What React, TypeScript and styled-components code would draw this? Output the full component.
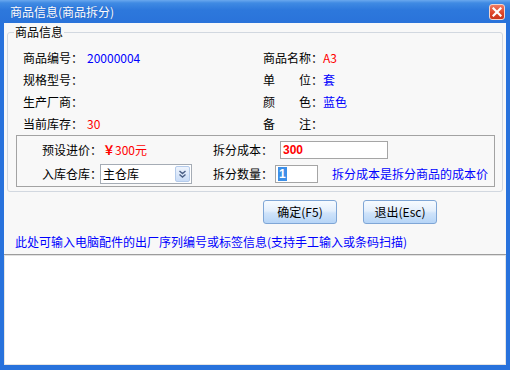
import React from "react";
import styled, { createGlobalStyle } from "styled-components";

const Global = createGlobalStyle`
  html, body { margin: 0; padding: 0; background: #ffffff; }
  body {
    font-family: "Noto Sans CJK SC", "Noto Sans", sans-serif;
    font-size: 12px;
    color: #000;
  }
  * { box-sizing: border-box; }
`;

const Window = styled.div`
  width: 510px;
  height: 370px;
  display: flex;
  flex-direction: column;
  background: #2872dc;
`;

const TitleBar = styled.div`
  height: 23px;
  flex: none;
  display: flex;
  align-items: center;
  justify-content: space-between;
  padding: 0 5px 0 10px;
  background: linear-gradient(#6aa8ee 0px, #3f8ae3 3px, #2d78dc 10px, #2a73da 100%);
`;

const Title = styled.div`
  color: #ffffff;
  font-size: 12px;
  line-height: 14px;
  text-shadow: 0 0 1px rgba(0, 40, 120, 0.4);
`;

const CloseButton = styled.button`
  width: 16px;
  height: 16px;
  padding: 0;
  margin-top: 1px;
  border: 1px solid #f3d4cc;
  border-radius: 3px;
  background: linear-gradient(#f27a62, #dc4326 60%, #c9361c);
  display: flex;
  align-items: center;
  justify-content: center;
`;

const Body = styled.div`
  flex: 1;
  margin: 0 4px 5px 4px;
  background: #f8f8f8;
  display: flex;
  flex-direction: column;
  min-height: 0;
`;

const Group = styled.fieldset`
  margin: 2px 3px 0 3px;
  padding: 8px 7px 4px 8px;
  border: 1px solid #d2d8e0;
  border-radius: 3px;
  min-width: 0;
`;

const Legend = styled.legend`
  padding: 0 1px;
  margin-left: -2px;
  font-size: 12px;
  line-height: 14px;
`;

const InfoGrid = styled.div`
  display: grid;
  grid-template-columns: 64px 176px 60px 1fr;
  grid-auto-rows: 22px;
  align-items: center;
  padding-left: 7px;
`;

const Label = styled.div<{ $spread?: boolean }>`
  line-height: 14px;
  white-space: nowrap;
  display: ${(p) => (p.$spread ? "flex" : "block")};
  justify-content: space-between;
`;

const Value = styled.div<{ $color?: string }>`
  line-height: 14px;
  color: ${(p) => p.$color || "#000"};
  white-space: nowrap;
`;

const SubBox = styled.div`
  border: 1px solid #a3a3a3;
  padding: 4px 0 2px 25px;
  display: grid;
  grid-template-columns: 58px 113px 62px auto;
  grid-template-rows: 20px 20px;
  row-gap: 4px;
  align-items: center;
`;

const Price = styled.div`
  color: #ff0000;
  padding-left: 3px;
  line-height: 14px;
  white-space: nowrap;
`;

const Yen = styled.span`
  font-weight: bold;
`;

const TextBox = styled.div<{ $width: number; $offset?: number }>`
  width: ${(p) => p.$width}px;
  height: 18px;
  margin-left: ${(p) => p.$offset || 0}px;
  background: #ffffff;
  border: 1px solid #a5a5a5;
  display: flex;
  align-items: center;
  padding-left: 2px;
  font-family: "Liberation Sans", "Noto Sans CJK SC", sans-serif;
  font-weight: bold;
  font-size: 12px;
`;

const RedText = styled.span`
  color: #ff0000;
`;

const Selected = styled.span`
  background: #3d8fe8;
  color: #ffffff;
  padding: 0 1px;
  line-height: 14px;
`;

const SelectBox = styled.div`
  width: 92px;
  height: 20px;
  background: #ffffff;
  border: 1px solid #a5acb5;
  display: flex;
  align-items: center;
  justify-content: space-between;
  padding: 0 1px 0 2px;
`;

const SelectText = styled.span`
  line-height: 14px;
`;

const DropButton = styled.div`
  width: 15px;
  height: 16px;
  border: 1px solid #b4cbeb;
  border-radius: 2px;
  background: linear-gradient(#eef4fd, #c9dcf7);
  display: flex;
  align-items: center;
  justify-content: center;
`;

const Row = styled.div`
  display: flex;
  align-items: center;
`;

const Note = styled.span`
  color: #0000ff;
  margin-left: 14px;
  line-height: 14px;
  white-space: nowrap;
`;

const ButtonRow = styled.div`
  display: flex;
  gap: 26px;
  margin-top: 8px;
  padding-left: 259px;
`;

const ActionButton = styled.button`
  width: 74px;
  height: 24px;
  padding: 0;
  border: 1px solid #7fa6d6;
  border-radius: 3px;
  background: linear-gradient(#f7fbff 0%, #e4effc 45%, #cfe3fa 55%, #b6d5f7 100%);
  font-family: "Noto Sans CJK SC", "Noto Sans", sans-serif;
  font-size: 12px;
  line-height: 14px;
  color: #000;
`;

const Help = styled.div`
  margin-top: 11px;
  padding-left: 11px;
  color: #0000ff;
  line-height: 14px;
  white-space: nowrap;
`;

const Memo = styled.textarea`
  flex: 1;
  margin-top: 5px;
  width: 100%;
  resize: none;
  border: none;
  border-top: 1px solid #9c9c9c;
  box-shadow: inset 0 1px 0 #e2e2e2, inset 1px 0 0 #e4e4e4, inset -1px 0 0 #e4e4e4, inset 0 -1px 0 #e4e4e4;
  background: #ffffff;
  outline: none;
`;

export default function App() {
  return (
    <>
      <Global />
      <Window>
        <TitleBar>
          <Title>商品信息(商品拆分)</Title>
          <CloseButton aria-label="close">
            <svg width="10" height="10" viewBox="0 0 10 10">
              <path d="M1.5 1.5 L8.5 8.5 M8.5 1.5 L1.5 8.5" stroke="#ffffff" strokeWidth="2.2" strokeLinecap="square" />
            </svg>
          </CloseButton>
        </TitleBar>
        <Body>
          <Group>
            <Legend>商品信息</Legend>
            <InfoGrid>
              <Label>商品编号：</Label>
              <Value $color="#0000ff">20000004</Value>
              <Label>商品名称：</Label>
              <Value $color="#ff0000">A3</Value>

              <Label>规格型号：</Label>
              <Value />
              <Label $spread>
                <span>单</span>
                <span>位：</span>
              </Label>
              <Value $color="#0000ff">套</Value>

              <Label>生产厂商：</Label>
              <Value />
              <Label $spread>
                <span>颜</span>
                <span>色：</span>
              </Label>
              <Value $color="#0000ff">蓝色</Value>

              <Label>当前库存：</Label>
              <Value $color="#ff0000">30</Value>
              <Label $spread>
                <span>备</span>
                <span>注：</span>
              </Label>
              <Value />
            </InfoGrid>
            <SubBox>
              <Label>预设进价：</Label>
              <Price>
                <Yen>￥</Yen>300元
              </Price>
              <Label>拆分成本：</Label>
              <TextBox $width={108} $offset={5}>
                <RedText>300</RedText>
              </TextBox>

              <Label>入库仓库：</Label>
              <SelectBox>
                <SelectText>主仓库</SelectText>
                <DropButton>
                  <svg width="9" height="8" viewBox="0 0 9 8">
                    <path d="M1.5 1 L4.5 3.5 L7.5 1 M1.5 4.5 L4.5 7 L7.5 4.5" stroke="#4a5f86" strokeWidth="1.4" fill="none" />
                  </svg>
                </DropButton>
              </SelectBox>
              <Label>拆分数量：</Label>
              <Row>
                <TextBox $width={43}>
                  <Selected>1</Selected>
                </TextBox>
                <Note>拆分成本是拆分商品的成本价</Note>
              </Row>
            </SubBox>
          </Group>
          <ButtonRow>
            <ActionButton>确定(F5)</ActionButton>
            <ActionButton>退出(Esc)</ActionButton>
          </ButtonRow>
          <Help>此处可输入电脑配件的出厂序列编号或标签信息(支持手工输入或条码扫描)</Help>
          <Memo />
        </Body>
      </Window>
    </>
  );
}
